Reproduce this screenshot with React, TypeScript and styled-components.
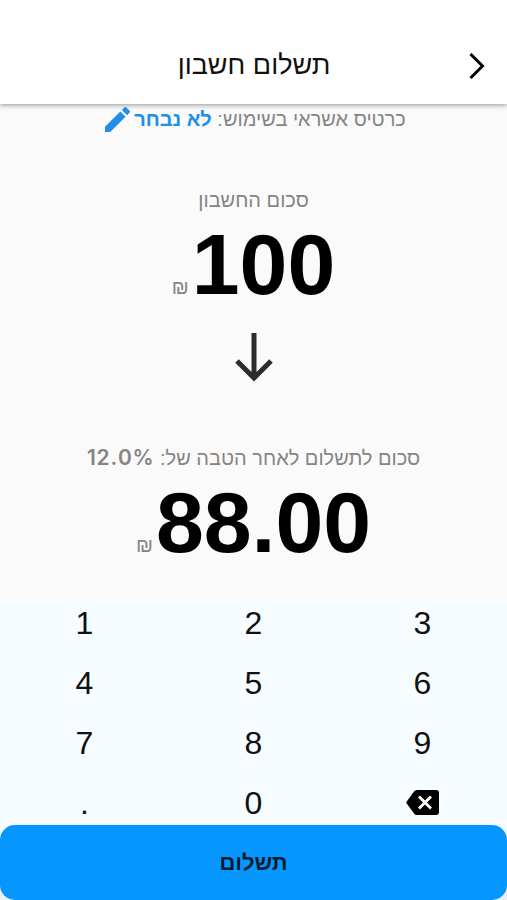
import React from 'react';
import styled, { createGlobalStyle } from 'styled-components';

const GlobalStyle = createGlobalStyle`
  * { box-sizing: border-box; }
  body { margin: 0; background: #fafafa; font-family: 'Liberation Sans', Arial, sans-serif; }
  button { font: inherit; color: inherit; border: 0; padding: 0; background: none; }
`;

const Screen = styled.main`
  display: flex;
  flex-direction: column;
  width: 507px;
  height: 900px;
  overflow: hidden;
  background: #fafafa;
`;

const Header = styled.header`
  display: grid;
  grid-template-columns: 60px 1fr 60px;
  align-items: center;
  height: 104px;
  padding-top: 26px;
  background: #fff;
  box-shadow: 0 1px 5px rgba(0, 0, 0, 0.42);
  flex: none;
  z-index: 1;
`;

const Title = styled.h1`
  grid-column: 2;
  margin: 0;
  padding-left: 1px;
  text-align: center;
  font-size: 27px;
  line-height: 36px;
  font-weight: 400;
  color: #111;
`;

const BackButton = styled.button`
  display: flex;
  justify-content: center;
  padding-top: 1px;
`;

const Content = styled.section`
  display: flex;
  flex-direction: column;
  align-items: center;
  height: 497px;
  flex: none;
`;

const CardRow = styled.div`
  display: flex;
  align-items: center;
  gap: 4px;
  height: 30px;
  padding-left: 4px;
  font-size: 20px;
  color: #858585;
`;

const CardChoice = styled.strong`
  color: #218fe9;
  font-weight: 700;
`;

const Caption = styled.div<{ $top: number }>`
  margin-top: ${(p) => p.$top}px;
  height: 28px;
  line-height: 28px;
  font-size: 20px;
  color: #858585;
`;

const Percent = styled.strong`
  font-family: Inter, sans-serif;
  font-size: 21px;
  font-weight: 600;
  line-height: 20px;
  letter-spacing: 0.8px;
`;

const Amount = styled.div`
  display: flex;
  align-items: baseline;
  gap: 3px;
  height: 98px;
  line-height: 98px;
  padding-top: 1px;
`;

const Figure = styled.span`
  font: 700 86px/98px 'Liberation Sans', sans-serif;
  color: #000;
`;

const Currency = styled.span`
  font-size: 20px;
  color: #858585;
`;

const ArrowSlot = styled.div`
  display: flex;
  height: 66px;
  padding-top: 20px;
`;

const Keypad = styled.section`
  display: grid;
  grid-template-columns: repeat(3, 1fr);
  grid-template-rows: repeat(4, 60px);
  height: 232px;
  flex: none;
  margin-top: -8px;
  background: linear-gradient(#fafafa 8px, #f6fcff 8px);
`;

const Key = styled.button`
  display: flex;
  align-items: center;
  justify-content: center;
  height: 60px;
  font: 400 32px/60px 'Liberation Sans', sans-serif;
  color: #111;
`;

const EraseKey = styled(Key)`
  padding-bottom: 2px;
`;

const Footer = styled.footer`
  height: 75px;
  flex: none;
  background: linear-gradient(#f6fcff 50%, #eeeff0 50%);
`;

const PayButton = styled.button`
  width: 100%;
  height: 75px;
  border-radius: 15px;
  background: #0696ff;
  color: #071b2c;
  font-size: 22px;
  font-weight: 700;
`;

const BackspaceIcon = () => (
  <svg width="33" height="25" viewBox="0 0 33 25">
    <path d="M11 0H30Q33 0 33 3V22Q33 25 30 25H11Q9 25 8 23.5L0 12.5L8 1.500Q9 0 11 0Z" fill="#000" />
    <path d="M13 6.500L25 18.500M25 6.500L13 18.500" stroke="#fff" strokeWidth="2.800" />
  </svg>
);

const PencilIcon = () => (
  <svg width="25" height="25" viewBox="3 3 18 18" fill="#218fe9">
    <path d="M3 17.250V21h3.750L17.810 9.940l-3.750-3.750L3 17.250zM20.710 7.040a1 1 0 0 0 0-1.410l-2.340-2.340a1 1 0 0 0-1.410 0l-1.830 1.830 3.750 3.750 1.830-1.830z" />
  </svg>
);

const keys = ['1', '2', '3', '4', '5', '6', '7', '8', '9', '.', '0'];

export default function App() {
  return (
    <Screen>
      <GlobalStyle />
      <Header>
        <Title dir="rtl">תשלום חשבון</Title>
        <BackButton aria-label="חזרה">
          <svg width="18" height="28" viewBox="0 0 18 28" fill="none" stroke="#000" strokeWidth="3">
            <path d="M2.500 2L14.500 14L2.500 26" />
          </svg>
        </BackButton>
      </Header>
      <Content dir="rtl">
        <CardRow>
          <span>כרטיס אשראי בשימוש: <CardChoice>לא נבחר</CardChoice></span>
          <PencilIcon />
        </CardRow>
        <Caption $top={52}>סכום החשבון</Caption>
        <Amount>
          <Figure>100</Figure>
          <Currency>₪</Currency>
        </Amount>
        <ArrowSlot>
          <svg width="38" height="50" viewBox="0 0 38 50" fill="none" stroke="#2c2c2e" strokeWidth="5">
            <path d="M19 1V45M2 29L19 46L36 29" />
          </svg>
        </ArrowSlot>
        <Caption $top={66}>סכום לתשלום לאחר הטבה של: <Percent dir="ltr">12.0%</Percent></Caption>
        <Amount>
          <Figure>88.00</Figure>
          <Currency>₪</Currency>
        </Amount>
      </Content>
      <Keypad>
        {keys.map((k) => <Key key={k}>{k}</Key>)}
        <EraseKey aria-label="מחיקה"><BackspaceIcon /></EraseKey>
      </Keypad>
      <Footer><PayButton>תשלום</PayButton></Footer>
    </Screen>
  );
}
